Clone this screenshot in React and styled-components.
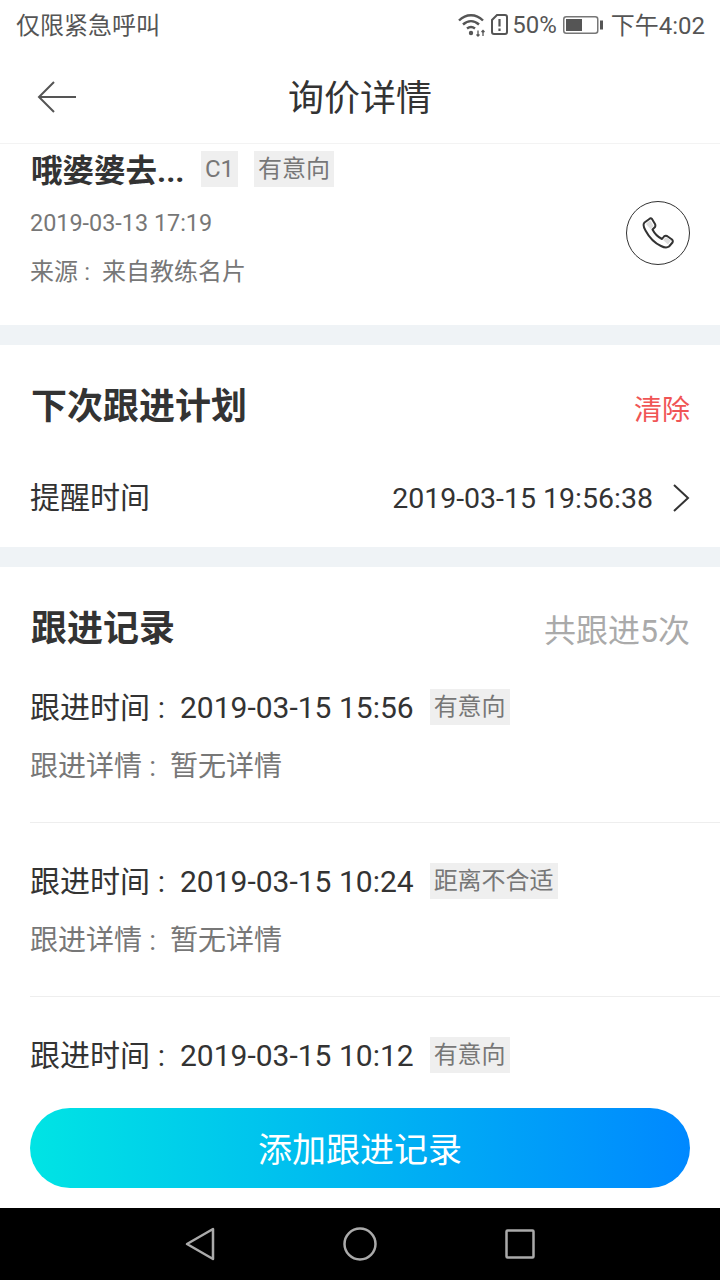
import React from "react";
import styled, { createGlobalStyle } from "styled-components";

const FONT = `Roboto, "Noto Sans CJK SC", sans-serif`;

const GlobalStyle = createGlobalStyle`
  html, body {
    margin: 0;
    padding: 0;
    background: #fff;
  }
  body {
    font-family: ${FONT};
  }
`;

const Page = styled.div`
  width: 720px;
  height: 1280px;
  display: flex;
  flex-direction: column;
  overflow: hidden;
  background: #fff;
`;

const StatusBar = styled.div`
  height: 50px;
  flex: none;
  display: flex;
  align-items: center;
  justify-content: space-between;
  padding: 0 15px 4px 16px;
  box-sizing: border-box;
  color: #555;
  font-size: 24px;
`;

const StatusRight = styled.div`
  display: flex;
  align-items: center;
`;

const StatusIcon = styled.span`
  display: flex;
  margin: ${(p) => p.$top}px ${(p) => p.$right}px 0 0;
`;

const Percent = styled.span`
  margin: 3px 6px 0 4px;
`;

const Clock = styled.span`
  margin-left: 8px;
`;

const Header = styled.div`
  height: 93px;
  flex: none;
  display: flex;
  align-items: center;
  justify-content: center;
  position: relative;
  border-bottom: 1px solid #f3f3f3;
`;

const BackButton = styled.div`
  position: absolute;
  left: 37px;
  top: 30px;
  display: flex;
`;

const Title = styled.div`
  font-size: 36px;
  color: #333;
  margin-bottom: 4px;
`;

const Content = styled.div`
  flex: 1;
  min-height: 0;
  overflow: hidden;
`;

const Section = styled.div`
  background: #fff;
  padding: ${(p) => p.$padding};
  border-bottom: ${(p) => (p.$gap ? "20px solid #eff3f6" : "none")};
`;

const InfoCard = styled(Section)`
  height: 181px;
  box-sizing: content-box;
  display: flex;
  justify-content: space-between;
  padding: 0 30px;
`;

const NameRow = styled.div`
  display: flex;
  align-items: center;
  height: 36px;
  margin-top: 7px;
`;

const Name = styled.div`
  font-size: 31.5px;
  font-weight: 700;
  color: #333;
  margin-left: 1px;
  width: 170px;
  padding-bottom: 2px;
`;

const Tag = styled.span`
  display: inline-block;
  height: 36px;
  line-height: 36px;
  padding: 0 4px;
  background: #efefef;
  color: #777;
  font-size: 24px;
  margin-left: ${(p) => p.$left || 0}px;
`;

const Colon = styled.span`
  display: inline-block;
  width: 1em;
  box-sizing: border-box;
  padding-left: 0.26em;
`;

const MetaLine = styled.div`
  font-size: ${(p) => p.$size}px;
  line-height: 36px;
  color: #777;
  margin-top: ${(p) => p.$top}px;
`;

const CallButton = styled.div`
  width: 62px;
  height: 62px;
  border: 1px solid #333;
  border-radius: 50%;
  display: flex;
  align-items: center;
  justify-content: center;
  margin-top: 57px;
`;

const SectionHead = styled.div`
  display: flex;
  align-items: center;
  justify-content: space-between;
  height: 44px;
`;

const SectionTitle = styled.div`
  font-size: 36px;
  font-weight: 700;
  color: #333;
  margin: 0 0 7px 1px;
`;

const Clear = styled.div`
  font-size: 28px;
  color: #f05555;
  margin-top: 4px;
`;

const Count = styled.div`
  font-size: 32px;
  color: #aaa;
`;

const PlanRow = styled.div`
  display: flex;
  align-items: center;
  justify-content: space-between;
  margin-top: 48px;
  height: 44px;
  font-size: 30px;
  color: #333;
`;

const PlanLabel = styled.span`
  margin-bottom: 6px;
`;

const PlanValue = styled.div`
  display: flex;
  align-items: center;
  gap: 19px;
  font-size: 28.5px;
`;

const RecordList = styled.div`
  margin-top: 39px;
`;

const Record = styled.div`
  height: 133px;
  border-bottom: 1px solid #eee;
  margin: 0 -30px 40px 0;
`;

const RecordTop = styled.div`
  display: flex;
  align-items: center;
  height: 36px;
  font-size: 30px;
  color: #333;
`;

const RecordLabel = styled.span`
  margin-bottom: 5px;
`;

const RecordDetail = styled.div`
  font-size: 28px;
  color: #777;
  margin-top: 24px;
  height: 36px;
  line-height: 36px;
`;

const RecordTag = styled(Tag)`
  margin-left: 16px;
`;

const Footer = styled.div`
  flex: none;
  height: 120px;
  box-sizing: border-box;
  background: #fff;
  padding: 20px 30px 0;
`;

const AddButton = styled.div`
  height: 80px;
  border-radius: 40px;
  background: linear-gradient(90deg, #00e4e4 0%, #0088ff 100%);
  color: #fff;
  font-size: 34px;
  display: flex;
  align-items: center;
  justify-content: center;
  padding-bottom: 2px;
  box-sizing: border-box;
`;

const NavBar = styled.div`
  height: 72px;
  flex: none;
  background: #000;
  display: flex;
  align-items: center;
  justify-content: center;
  gap: 128px;
`;

// the third row's detail line is hidden under the footer in the screenshot
const records = [
  { time: "2019-03-15 15:56", tag: "有意向", detail: "暂无详情" },
  { time: "2019-03-15 10:24", tag: "距离不合适", detail: "暂无详情" },
  { time: "2019-03-15 10:12", tag: "有意向" },
];

const WifiIcon = () => (
  <svg width="28" height="24" viewBox="0 0 28 24" fill="none" stroke="#555" strokeWidth="2.400">
    <path d="M1 7.500c7-7 17-7 24 0" />
    <path d="M5 11.500c5-4.500 11-4.500 16 0" />
    <path d="M9 15.500c2.500-2 5.500-2 8 0" />
    <circle cx="13" cy="20" r="2.200" fill="#555" stroke="none" />
    <path d="M20 17.500v5.500M18.500 21.500l1.500 1.500 1.500-1.500M25 23v-5.500M23.500 19l1.500-1.500 1.500 1.500" strokeWidth="1.300" />
  </svg>
);

const SimIcon = () => (
  <svg width="17" height="21" viewBox="0 0 17 21" fill="none" stroke="#555" strokeWidth="2">
    <path d="M6 1h8a2 2 0 0 1 2 2v15a2 2 0 0 1-2 2H3a2 2 0 0 1-2-2V6z" />
    <path d="M8.500 5v7.500M8.500 14.500v2.500" strokeWidth="2.200" />
  </svg>
);

const BatteryIcon = () => (
  <svg width="40" height="18" viewBox="0 0 40 18">
    <rect x="0.750" y="0.750" width="34" height="16.500" rx="2.500" fill="none" stroke="#777" strokeWidth="1.500" />
    <rect x="3" y="3" width="16" height="12" fill="#555" />
    <rect x="37" y="4.500" width="3" height="9" fill="#555" />
  </svg>
);

const PhoneIcon = () => (
  <svg width="34" height="34" viewBox="0 0 34 34">
    <path
      d="M9 2.500 3.500 6.500C2 8 2.500 11 4.500 14.500 8 21 13.500 27 20 30c3 1.500 6 2 8 .5l3.500-4c.5-1 .5-2-.5-3l-5-3.500c-1-.5-2-.5-3 .5l-2 2.500C17 21 13 16.500 11.500 13.500L14 11c.5-1 .5-2 0-3l-3-5C10.500 2.500 10 2 9 2.500z"
      fill="#fff"
      stroke="#333"
      strokeWidth="2"
      strokeLinejoin="round"
    />
    <path d="M5 8l4-4 3.500 6-3 3z" fill="#ddd" />
    <path d="M22 24l3-3 5 3.500-3 4z" fill="#ddd" />
  </svg>
);

export default function App() {
  return (
    <Page>
      <GlobalStyle />
      <StatusBar>
        <span>仅限紧急呼叫</span>
        <StatusRight>
          <StatusIcon $top={3} $right={5}>
            <WifiIcon />
          </StatusIcon>
          <StatusIcon $top={2} $right={0}>
            <SimIcon />
          </StatusIcon>
          <Percent>50%</Percent>
          <StatusIcon $top={4} $right={0}>
            <BatteryIcon />
          </StatusIcon>
          <Clock>下午4:02</Clock>
        </StatusRight>
      </StatusBar>
      <Header>
        <BackButton>
          <svg width="40" height="34" viewBox="0 0 40 34" fill="none" stroke="#555" strokeWidth="2">
            <path d="M39 17H2M17 2 2 17l15 15" />
          </svg>
        </BackButton>
        <Title>询价详情</Title>
      </Header>
      <Content>
        <InfoCard $gap>
          <div>
            <NameRow>
              <Name>哦婆婆去...</Name>
              <Tag>C1</Tag>
              <Tag $left={16}>有意向</Tag>
            </NameRow>
            <MetaLine $size={23.4} $top={18}>2019-03-13 17:19</MetaLine>
            <MetaLine $size={24} $top={13}>
              来源<Colon>:</Colon>来自教练名片
            </MetaLine>
          </div>
          <CallButton>
            <PhoneIcon />
          </CallButton>
        </InfoCard>
        <Section $gap $padding="39px 30px 27px">
          <SectionHead>
            <SectionTitle>下次跟进计划</SectionTitle>
            <Clear>清除</Clear>
          </SectionHead>
          <PlanRow>
            <PlanLabel>提醒时间</PlanLabel>
            <PlanValue>
              2019-03-15 19:56:38
              <svg width="18" height="30" viewBox="0 0 18 30" fill="none" stroke="#333" strokeWidth="2">
                <path d="M2 2l14 13L2 28" />
              </svg>
            </PlanValue>
          </PlanRow>
        </Section>
        <Section $padding="39px 30px 0">
          <SectionHead>
            <SectionTitle>跟进记录</SectionTitle>
            <Count>共跟进5次</Count>
          </SectionHead>
          <RecordList>
            {records.map((r) => (
              <Record key={r.time}>
                <RecordTop>
                  <RecordLabel>
                    跟进时间<Colon>:</Colon>
                  </RecordLabel>
                  {r.time}
                  <RecordTag>{r.tag}</RecordTag>
                </RecordTop>
                {r.detail && (
                  <RecordDetail>
                    跟进详情<Colon>:</Colon>
                    {r.detail}
                  </RecordDetail>
                )}
              </Record>
            ))}
          </RecordList>
        </Section>
      </Content>
      <Footer>
        <AddButton>添加跟进记录</AddButton>
      </Footer>
      <NavBar>
        <svg width="30" height="34" viewBox="0 0 30 34" fill="none" stroke="#aaa" strokeWidth="2.500" strokeLinejoin="round">
          <path d="M28 2v30L2 17z" />
        </svg>
        <svg width="34" height="34" viewBox="0 0 34 34" fill="none" stroke="#aaa" strokeWidth="2.500">
          <circle cx="17" cy="17" r="15.500" />
        </svg>
        <svg width="30" height="30" viewBox="0 0 30 30" fill="none" stroke="#aaa" strokeWidth="2.500" strokeLinejoin="round">
          <rect x="1.500" y="1.500" width="27" height="27" rx="1" />
        </svg>
      </NavBar>
    </Page>
  );
}
